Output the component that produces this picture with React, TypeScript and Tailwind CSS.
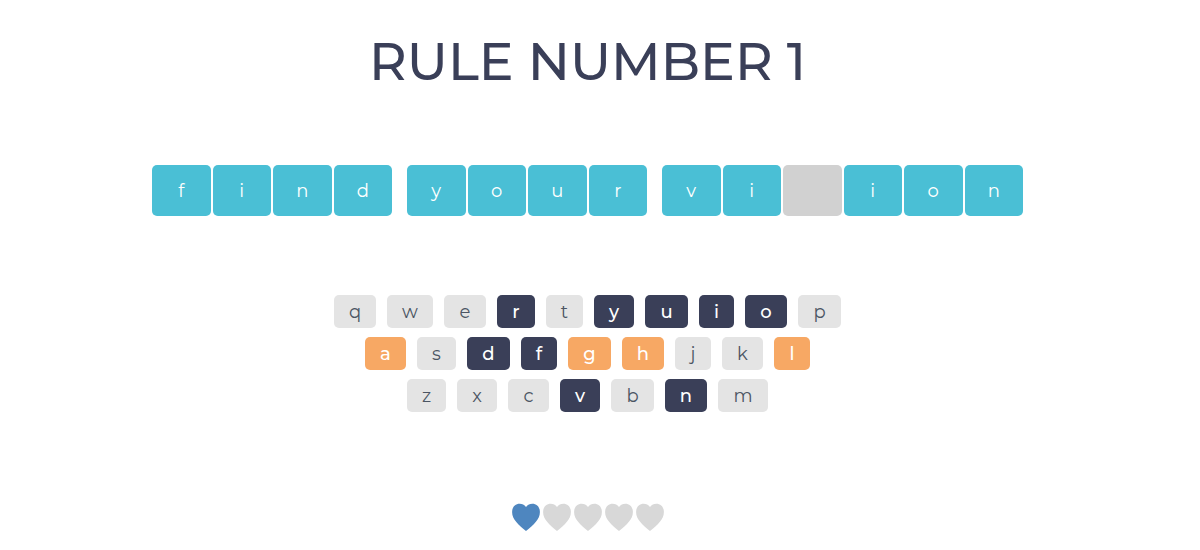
type KeyState = "idle" | "hit" | "miss";

const keyStyles: Record<KeyState, string> = {
  idle: "bg-[#e4e4e4] text-[#4b5563]",
  hit: "bg-[#3a3f58] text-white font-medium",
  miss: "bg-[#f7a864] text-white font-medium",
};

const keyWidths: Record<string, string> = {
  q: "w-[42px]", w: "w-[46px]", e: "w-[42px]", r: "w-[38px]", t: "w-[37px]",
  y: "w-[40px]", u: "w-[43px]", i: "w-[35px]", o: "w-[42px]", p: "w-[43px]",
  a: "w-[41px]", s: "w-[39px]", d: "w-[43px]", f: "w-[36px]", g: "w-[43px]",
  h: "w-[42px]", j: "w-[36px]", k: "w-[41px]", l: "w-[36px]",
  z: "w-[39px]", x: "w-[40px]", c: "w-[41px]", v: "w-[40px]", b: "w-[43px]",
  n: "w-[42px]", m: "w-[50px]",
};

const words = ["find", "your", "vision"];
const rows = ["qwertyuiop", "asdfghjkl", "zxcvbnm"];
const hits = "ryuiodfvn";
const misses = "aghl";

function stateOf(letter: string): KeyState {
  if (hits.includes(letter)) return "hit";
  if (misses.includes(letter)) return "miss";
  return "idle";
}

function Tile({ letter, startsWord }: { letter: string; startsWord: boolean }) {
  const found = hits.includes(letter);
  return (
    <span
      className={`flex h-[51px] flex-1 items-center justify-center rounded-[5px] text-lg text-white ${
        found ? "bg-[#4abfd5]" : "bg-[#d1d1d1]"
      } ${startsWord ? "ml-[13px]" : ""}`}
    >
      {found ? letter : ""}
    </span>
  );
}

function Heart({ active }: { active: boolean }) {
  return (
    <svg
      viewBox="0 0 28 28"
      className={`size-7 ${active ? "text-[#4e86bf]" : "text-[#d8d8d8]"}`}
      fill="currentColor"
      aria-hidden="true"
    >
      <path d="M14 4C12.3 1.8 10.2.8 7.7.8 3.2.8.1 4.2.1 8.9c0 3.6 1.5 6.8 4 9.8 2.7 3.3 6 6 9.9 9.3 3.9-3.3 7.2-6 9.9-9.3 2.5-3 4-6.2 4-9.8 0-4.7-3.1-8.1-7.6-8.1-2.5 0-4.6 1-6.3 3.2Z" />
    </svg>
  );
}

export default function App() {
  return (
    <main className="flex min-h-screen flex-col items-center bg-white pt-8 pr-[25px] font-['Montserrat','Inter',sans-serif]">
      <h1 className="text-center text-[52px] leading-[60px] font-medium text-[#3a3f58]">
        RULE NUMBER 1
      </h1>

      <div className="mt-[73px] flex w-full max-w-[871px] gap-[2px]">
        {words.map((word, w) =>
          word.split("").map((letter, i) => (
            <Tile key={`${w}-${i}`} letter={letter} startsWord={w > 0 && i === 0} />
          )),
        )}
      </div>

      <div className="mt-[79px] flex flex-col items-center gap-[9px]">
        {rows.map((row) => (
          <div key={row} className="flex gap-[11px]">
            {row.split("").map((letter) => (
              <button
                key={letter}
                type="button"
                className={`flex h-[33px] items-center justify-center rounded-[5px] text-lg ${keyWidths[letter]} ${keyStyles[stateOf(letter)]}`}
              >
                {letter}
              </button>
            ))}
          </div>
        ))}
      </div>

      <div className="mt-[91px] flex gap-[3px]" role="img" aria-label="1 of 5 lives left">
        {[0, 1, 2, 3, 4].map((n) => (
          <Heart key={n} active={n === 0} />
        ))}
      </div>
    </main>
  );
}
